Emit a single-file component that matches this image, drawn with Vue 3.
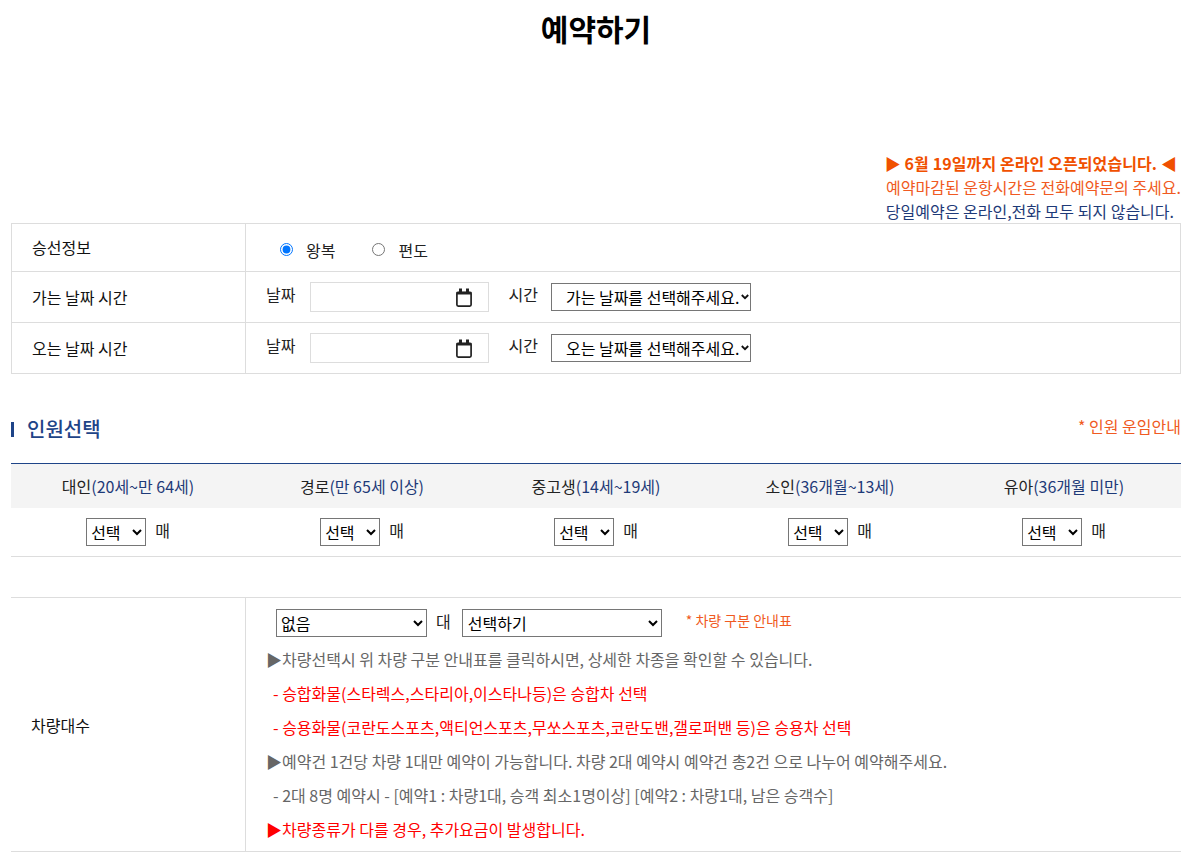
<script setup>
const people = [
  { name: '대인', age: '(20세~만 64세)' },
  { name: '경로', age: '(만 65세 이상)' },
  { name: '중고생', age: '(14세~19세)' },
  { name: '소인', age: '(36개월~13세)' },
  { name: '유아', age: '(36개월 미만)' },
]
const dates = [
  { label: '가는 날짜 시간', hint: '가는 날짜를 선택해주세요.' },
  { label: '오는 날짜 시간', hint: '오는 날짜를 선택해주세요.' },
]
</script>

<template>
  <div class="page">
    <h1 class="title">예약하기</h1>

    <div class="notice">
      <p class="n1">▶ 6월 19일까지 온라인 오픈되었습니다. ◀</p>
      <p class="n2">예약마감된 운항시간은 전화예약문의 주세요.</p>
      <p class="n3">당일예약은 온라인,전화 모두 되지 않습니다.</p>
    </div>

    <div class="info">
      <div class="row first">
        <div class="th th-top">승선정보</div>
        <div class="td radios">
          <label class="radio"><input type="radio" name="trip" checked />왕복</label>
          <label class="radio"><input type="radio" name="trip" />편도</label>
        </div>
      </div>
      <div v-for="d in dates" :key="d.label" class="row">
        <div class="th">{{ d.label }}</div>
        <div class="td dates">
          <span class="lbl">날짜</span>
          <div class="date">
            <svg width="16" height="19" viewBox="0 0 16 19" fill="none">
              <rect x="0.9" y="4.4" width="14.2" height="13.7" rx="1.3" stroke="#222" stroke-width="1.7" />
              <path d="M0.5 5.2h15" stroke="#222" stroke-width="2.6" />
              <path d="M4.5 0.5v4M11.5 0.5v4" stroke="#222" stroke-width="3" />
            </svg>
          </div>
          <span class="lbl lbl2">시간</span>
          <div class="hint-wrap">
            <select class="sel hint"><option>{{ d.hint }}</option></select>
            <svg class="chev" width="8" height="6" viewBox="0 0 8 6" fill="none">
              <path d="M0.8 1l3.2 3.2L7.2 1" stroke="#111" stroke-width="1.8" />
            </svg>
          </div>
        </div>
      </div>
    </div>

    <div class="section">
      <h2 class="sec-title">인원선택</h2>
      <a class="link">* 인원 운임안내</a>
    </div>

    <div class="people">
      <div v-for="p in people" :key="p.name" class="p-head">
        {{ p.name }}<span class="age">{{ p.age }}</span>
      </div>
      <div v-for="p in people" :key="p.name + 'c'" class="p-cell">
        <select class="sel count"><option>선택</option></select>
        <span class="unit">매</span>
      </div>
    </div>

    <div class="car">
      <div class="car-th">차량대수</div>
      <div class="car-td">
        <div class="car-sel">
          <select class="sel none"><option>없음</option></select>
          <span class="unit">대</span>
          <select class="sel pick"><option>선택하기</option></select>
          <a class="guide">* 차량 구분 안내표</a>
        </div>
        <p class="line gray">▶차량선택시 위 차량 구분 안내표를 클릭하시면, 상세한 차종을 확인할 수 있습니다.</p>
        <p class="line red ind">- 승합화물(스타렉스,스타리아,이스타나등)은 승합차 선택</p>
        <p class="line red ind">- 승용화물(코란도스포츠,액티언스포츠,무쏘스포츠,코란도밴,갤로퍼밴 등)은 승용차 선택</p>
        <p class="line gray">▶예약건 1건당 차량 1대만 예약이 가능합니다. 차량 2대 예약시 예약건 총2건 으로 나누어 예약해주세요.</p>
        <p class="line gray ind">- 2대 8명 예약시 - [예약1 : 차량1대, 승객 최소1명이상] [예약2 : 차량1대, 남은 승객수]</p>
        <p class="line red">▶차량종류가 다를 경우, 추가요금이 발생합니다.</p>
      </div>
    </div>
  </div>
</template>

<style>
html, body { margin: 0; background: #fff; }
</style>

<style scoped>
.page {
  box-sizing: border-box;
  width: 1196px;
  height: 862px;
  padding: 0 15px 0 11px;
  overflow: hidden;
  font-family: "Noto Sans CJK KR", "Noto Sans", sans-serif;
  font-size: 16px;
  color: #222;
}
p { margin: 0; }
.title {
  margin: 0;
  height: 60px;
  line-height: 57px;
  font-size: 30px;
  font-weight: 700;
  text-align: center;
  color: #000;
}
.notice {
  margin-top: 91px;
  height: 72px;
  text-align: right;
  line-height: 24px;
}
.n1 { font-weight: 700; color: #f05000; padding-right: 4px; letter-spacing: 0.1px; }
.n2 { color: #f05a22; }
.n3 { color: #1e3a78; padding-right: 7px; }

.info { border: 1px solid #ddd; border-bottom: 0; }
.row { display: flex; height: 50px; border-bottom: 1px solid #ddd; }
.row.first { height: 47px; }
.th {
  box-sizing: border-box;
  width: 234px;
  flex: none;
  padding-left: 20px;
  display: flex;
  align-items: center;
  border-right: 1px solid #ddd;
  color: #111;
}
.th-top { padding-bottom: 2px; }
.td { display: flex; align-items: center; flex: 1; }
.radios { padding: 4px 0 0 34px; }
.radio { display: flex; align-items: center; margin-right: 37px; color: #222; }
.radio input { margin: 0 13px 0 0; width: 13px; height: 13px; }
.dates { padding-left: 20px; }
.lbl { position: relative; top: -3px; }
.date {
  box-sizing: border-box;
  width: 179px;
  height: 30px;
  margin-left: 15px;
  border: 1px solid #ddd;
  display: flex;
  align-items: center;
  justify-content: flex-end;
  padding-right: 16px;
}
.lbl2 { margin-left: 19px; }
.sel {
  box-sizing: border-box;
  font-family: inherit;
  font-size: 16px;
  height: 28px;
  border: 1px solid #767676;
  border-radius: 0;
  background: #fff;
  color: #000;
}
.hint-wrap { position: relative; display: flex; margin-left: 13px; }
.hint {
  width: 200px;
  padding: 0 0 0 14px;
  appearance: none;
}
.chev { position: absolute; right: 2px; top: 11px; pointer-events: none; }

.section {
  display: flex;
  justify-content: space-between;
  align-items: center;
  height: 30px;
  margin-top: 41px;
}
.sec-title {
  margin: 0;
  padding-left: 16px;
  position: relative;
  top: -2px;
  font-size: 20px;
  font-weight: 500;
  color: #1e4488;
}
.sec-title::before {
  content: "";
  position: absolute;
  left: 0;
  top: 50%;
  margin-top: -6px;
  width: 3px;
  height: 15px;
  background: #1e4488;
}
.link { color: #f05a22; position: relative; top: -4px; }

.people {
  display: grid;
  grid-template-columns: repeat(5, 234px);
  margin-top: 18px;
  border-top: 1px solid #1e4488;
  border-bottom: 1px solid #ddd;
}
.p-head {
  height: 44px;
  line-height: 45px;
  text-align: center;
  background: #f4f4f4;
  color: #222;
}
.age { color: #1e3a78; }
.p-cell {
  height: 48px;
  display: flex;
  align-items: center;
  justify-content: center;
  gap: 9px;
}
.count { width: 60px; padding-left: 0; }
.unit { position: relative; top: -2px; }

.car {
  display: flex;
  margin-top: 40px;
  border-top: 1px solid #ddd;
  border-bottom: 1px solid #ddd;
}
.car-th {
  box-sizing: border-box;
  width: 235px;
  flex: none;
  padding-left: 20px;
  display: flex;
  align-items: center;
  border-right: 1px solid #ddd;
  color: #111;
}
.car-td { flex: 1; padding: 11px 0 0 22px; height: 242px; }
.car-sel { display: flex; align-items: center; height: 28px; margin-bottom: 5px; }
.none { width: 151px; margin-left: 8px; padding-left: 0; }
.car-sel .unit { margin-left: 9px; margin-right: 11px; top: -2px; }
.pick { width: 200px; padding-left: 1px; }
.guide { margin-left: 24px; font-size: 14px; color: #f05a22; position: relative; top: -3px; }
.line { height: 34px; line-height: 34px; white-space: nowrap; margin-left: -2px; }
.gray { color: #666; }
.red { color: #f00; }
.ind { padding-left: 7px; }
</style>
